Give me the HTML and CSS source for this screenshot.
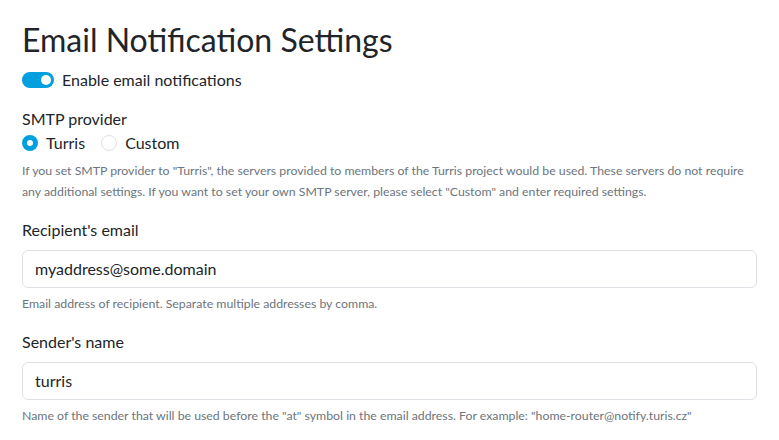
FILE: index.html
```html
<!DOCTYPE html>
<html>
<head>
<meta charset="utf-8">
<link rel="stylesheet" href="styles.css">
</head>
<body>
<div class="page">
  <h1 class="title">Email Notification Settings</h1>
  <label class="switch-row">
    <span class="switch"><span class="knob"></span></span>
    <span>Enable email notifications</span>
  </label>

  <div class="group provider">
    <div class="label">SMTP provider</div>
    <div class="radios">
      <label class="radio-item"><span class="radio checked"></span><span>Turris</span></label>
      <label class="radio-item"><span class="radio"></span><span>Custom</span></label>
    </div>
    <p class="help">If you set SMTP provider to "Turris", the servers provided to members of the Turris project would be used. These servers do not require any additional settings. If you want to set your own SMTP server, please select "Custom" and enter required settings.</p>
  </div>

  <div class="group recipient">
    <div class="label field-label">Recipient's email</div>
    <div class="input">myaddress@some.domain</div>
    <p class="help">Email address of recipient. Separate multiple addresses by comma.</p>
  </div>

  <div class="group sender">
    <div class="label field-label">Sender's name</div>
    <div class="input">turris</div>
    <p class="help">Name of the sender that will be used before the "at" symbol in the email address. For example: "home-router@notify.turis.cz"</p>
  </div>
</div>
</body>
</html>
```

FILE: styles.css
```css
html, body {
  margin: 0;
  padding: 0;
  background: #ffffff;
}
body {
  font-family: Lato, "Open Sans", sans-serif;
  font-size: 16px;
  line-height: 1.5;
  color: #212529;
}
.page {
  padding: 0 22px;
}
.title {
  font-size: 32px;
  font-weight: 400;
  line-height: 1.2;
  margin: 21px 0 9px;
  color: #212529;
}
.switch-row {
  display: flex;
  align-items: center;
  gap: 8px;
}
.switch {
  width: 32px;
  height: 16px;
  border-radius: 8px;
  background: #00a0e0;
  display: flex;
  align-items: center;
  justify-content: flex-end;
  padding: 0 3px;
  box-sizing: border-box;
}
.knob {
  width: 10px;
  height: 10px;
  border-radius: 50%;
  background: #fff;
}
.group {
  margin-top: 16px;
}
.group.provider {
  margin-top: 15px;
}
.label {
  display: block;
}
.field-label {
  margin-bottom: 8px;
}
.radios {
  display: flex;
  gap: 16px;
}
.radio-item {
  display: flex;
  align-items: center;
  gap: 8px;
}
.radio {
  width: 16px;
  height: 16px;
  border-radius: 50%;
  border: 1px solid #dee2e6;
  box-sizing: border-box;
  background: #fff;
}
.radio.checked {
  border: 5px solid #00a0e0;
}
.help {
  margin: 5px 0 0;
  font-size: 12.3px;
  line-height: 21px;
  color: #6c757d;
}
.input {
  border: 1px solid #dee2e6;
  border-radius: 6px;
  padding: 6px 12px;
  line-height: 24px;
  color: #212529;
}
```
